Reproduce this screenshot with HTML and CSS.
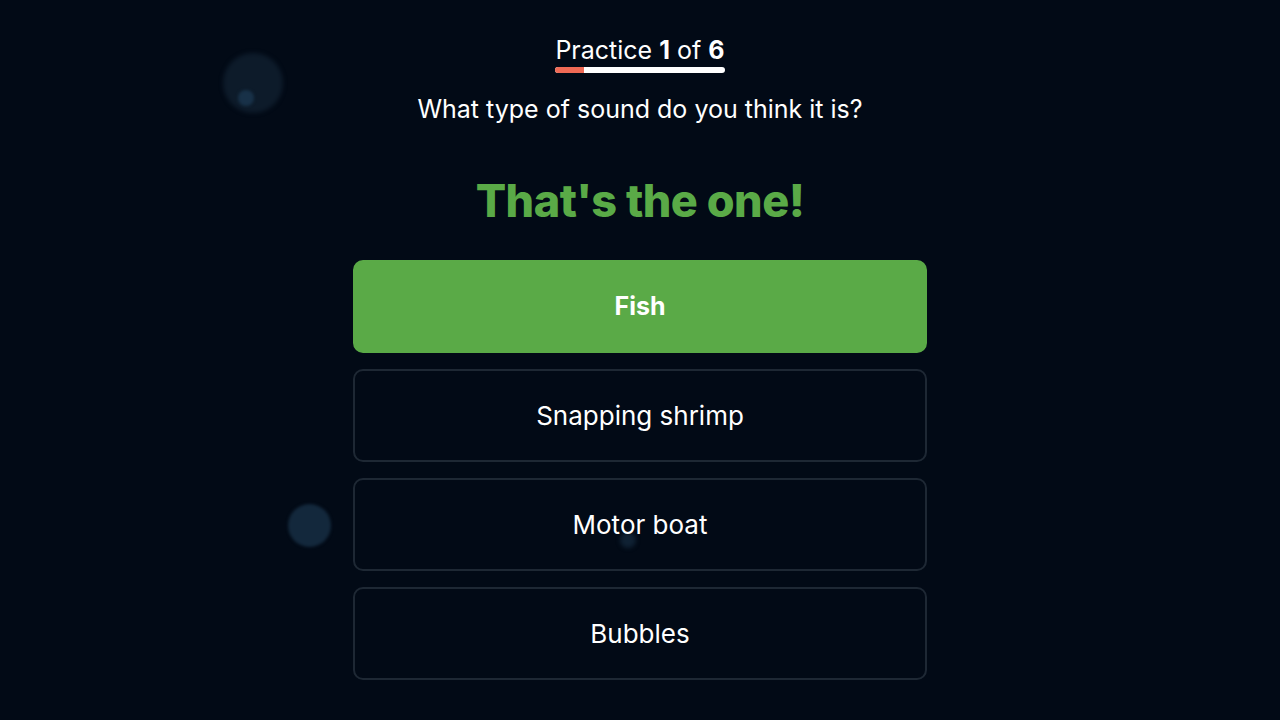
FILE: index.html
```html
<!DOCTYPE html>
<html lang="en">
<head>
<meta charset="utf-8">
<title>Practice</title>
<link rel="stylesheet" href="styles.css">
</head>
<body>
<div class="bubbles">
  <span class="bubble b1"></span>
  <span class="bubble b1-in"></span>
  <span class="bubble b2"></span>
  <span class="bubble b3"></span>
</div>
<main class="quiz">
  <div class="progress">
    <div class="progress-label">Practice <b>1</b> of <b>6</b></div>
    <div class="progress-track"><div class="progress-fill" style="width:16.67%"></div></div>
  </div>
  <p class="question">What type of sound do you think it is?</p>
  <h1 class="feedback">That's the one!</h1>
  <div class="options">
    <button class="option correct">Fish</button>
    <button class="option">Snapping shrimp</button>
    <button class="option">Motor boat</button>
    <button class="option">Bubbles</button>
  </div>
</main>
</body>
</html>
```
FILE: styles.css
```css
html, body {
  margin: 0;
  padding: 0;
  height: 100%;
}
body {
  background: #020a16;
  color: #ffffff;
  font-family: "Inter", "Noto Sans", sans-serif;
  overflow: hidden;
  position: relative;
}
.bubbles {
  position: absolute;
  inset: 0;
  pointer-events: none;
}
.bubble {
  position: absolute;
  border-radius: 50%;
}
.b1 {
  left: 223px; top: 53px; width: 60px; height: 60px;
  background: #0d1b2a;
  filter: blur(2px);
}
.b1-in {
  left: 238px; top: 90px; width: 16px; height: 16px;
  background: #183148;
  filter: blur(1.5px);
}
.b2 {
  left: 288px; top: 504px; width: 43px; height: 43px;
  background: #13283c;
  filter: blur(1.5px);
}
.b3 {
  left: 620px; top: 532px; width: 16px; height: 16px;
  background: #0f2133;
  filter: blur(2px);
}
.quiz {
  position: relative;
  display: flex;
  flex-direction: column;
  align-items: center;
  padding-top: 35px;
}
.progress {
  display: flex;
  flex-direction: column;
  align-items: stretch;
}
.progress-label {
  font-size: 25px;
  line-height: 31px;
  font-weight: 400;
  letter-spacing: 0;
  color: #ffffff;
}
.progress-label b {
  font-weight: 700;
}
.progress-track {
  height: 6px;
  background: #ffffff;
  border-radius: 3px;
  overflow: hidden;
  margin-top: 1px;
}
.progress-fill {
  height: 100%;
  background: #ef6a55;
}
.question {
  margin: 19px 0 0;
  font-size: 25px;
  line-height: 34px;
  letter-spacing: 0;
  color: #ffffff;
}
.feedback {
  margin: 47px 0 0;
  font-size: 45px;
  line-height: 56px;
  font-weight: 800;
  letter-spacing: -0.5px;
  color: #5aaa47;
}
.options {
  margin-top: 31px;
  width: 574px;
  display: flex;
  flex-direction: column;
  gap: 16.5px;
}
.option {
  height: 92.6px;
  border: 2px solid #1e2834;
  border-radius: 10px;
  background: transparent;
  color: #ffffff;
  font-family: inherit;
  font-size: 26px;
  letter-spacing: 0;
  font-weight: 400;
  padding: 0;
}
.option.correct {
  background: #5aaa47;
  border-color: #5aaa47;
  font-weight: 700;
  font-size: 25px;
}
```
